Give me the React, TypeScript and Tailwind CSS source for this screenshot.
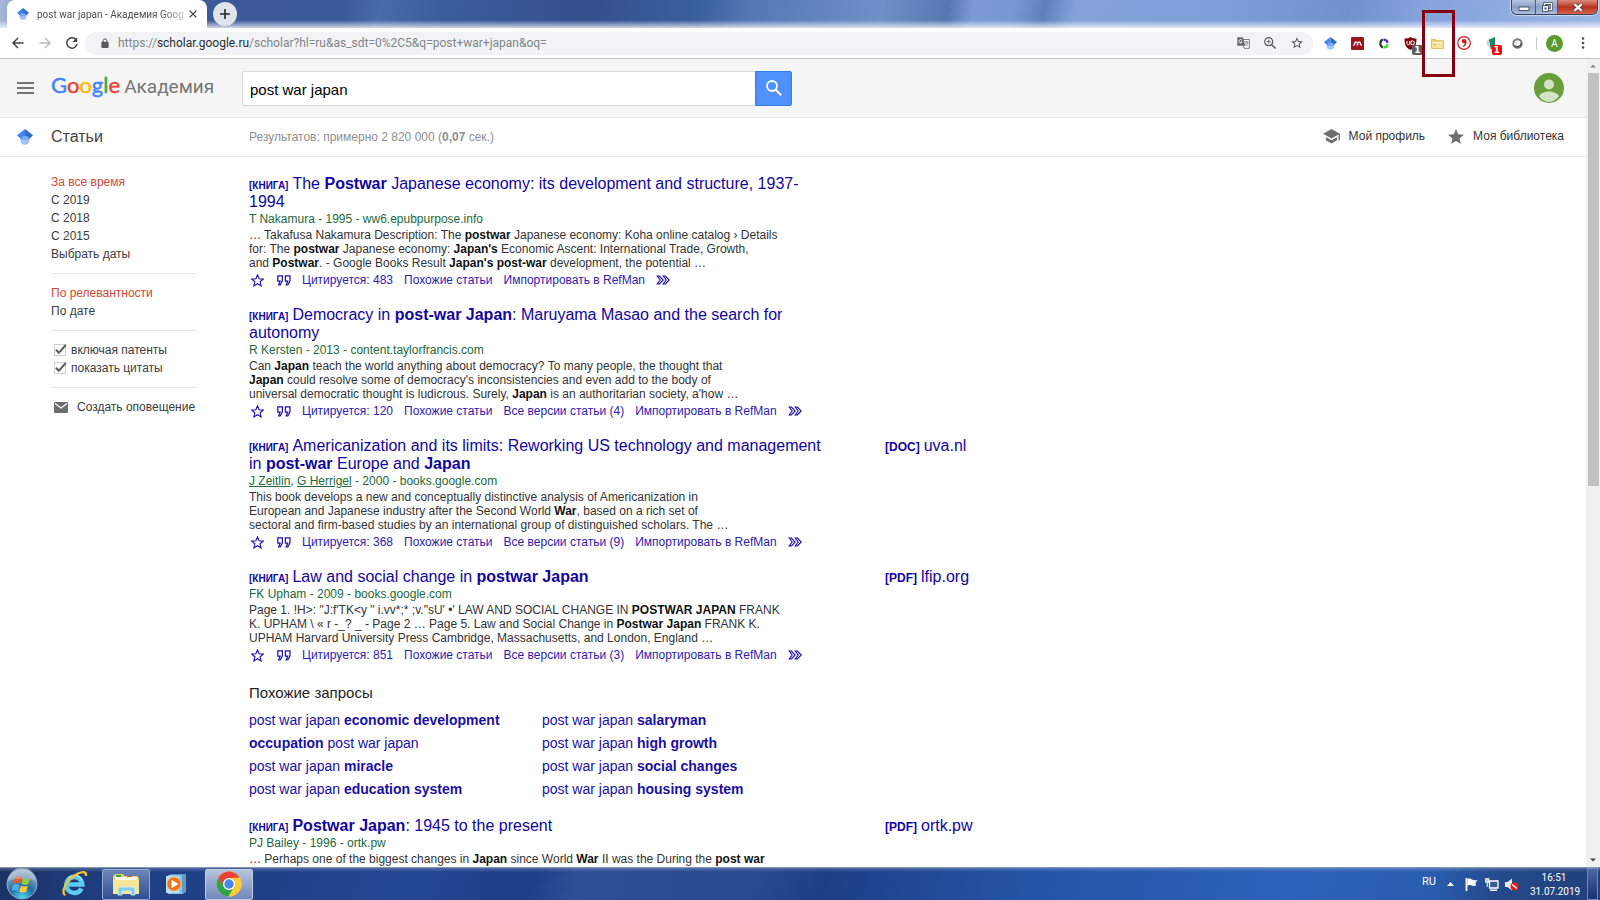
import type { ReactNode } from "react";

type Result = {
  title: string[];
  byline: ReactNode;
  snippet: string[];
  cited: number;
  versions?: number;
  file?: { kind: string; host: string };
};

const results: Result[] = [
  {
    title: ["The **Postwar** Japanese economy: its development and structure, 1937-", "1994"],
    byline: "T Nakamura - 1995 - ww6.epubpurpose.info",
    snippet: [
      "… Takafusa Nakamura Description: The **postwar** Japanese economy: Koha online catalog › Details",
      "for: The **postwar** Japanese economy: **Japan's** Economic Ascent: International Trade, Growth,",
      "and **Postwar**. - Google Books Result **Japan's post-war** development, the potential …",
    ],
    cited: 483,
  },
  {
    title: ["Democracy in **post-war Japan**: Maruyama Masao and the search for", "autonomy"],
    byline: "R Kersten - 2013 - content.taylorfrancis.com",
    snippet: [
      "Can **Japan** teach the world anything about democracy? To many people, the thought that",
      "**Japan** could resolve some of democracy's inconsistencies and even add to the body of",
      "universal democratic thought is ludicrous. Surely, **Japan** is an authoritarian society, a'how …",
    ],
    cited: 120,
    versions: 4,
  },
  {
    title: ["Americanization and its limits: Reworking US technology and management", "in **post-war** Europe and **Japan**"],
    byline: (
      <>
        <a href="#zeitlin" className="underline">J Zeitlin</a>, <a href="#herrigel" className="underline">G Herrigel</a> - 2000 - books.google.com
      </>
    ),
    snippet: [
      "This book develops a new and conceptually distinctive analysis of Americanization in",
      "European and Japanese industry after the Second World **War**, based on a rich set of",
      "sectoral and firm-based studies by an international group of distinguished scholars. The …",
    ],
    cited: 368,
    versions: 9,
    file: { kind: "[DOC]", host: "uva.nl" },
  },
  {
    title: ["Law and social change in **postwar Japan**"],
    byline: "FK Upham - 2009 - books.google.com",
    snippet: [
      "Page 1. !H>: \"J:f'TK<y \" i.vv*;* ;v.\"sU' •' LAW AND SOCIAL CHANGE IN **POSTWAR JAPAN** FRANK",
      "K. UPHAM \\ « r -_? _ - Page 2 … Page 5. Law and Social Change in **Postwar Japan** FRANK K.",
      "UPHAM Harvard University Press Cambridge, Massachusetts, and London, England …",
    ],
    cited: 851,
    versions: 3,
    file: { kind: "[PDF]", host: "lfip.org" },
  },
];

const lastResult: Result = {
  title: ["**Postwar Japan**: 1945 to the present"],
  byline: "PJ Bailey - 1996 - ortk.pw",
  snippet: ["… Perhaps one of the biggest changes in **Japan** since World **War** II was the During the **post war**"],
  cited: 0,
  file: { kind: "[PDF]", host: "ortk.pw" },
};

const related = [
  "post war japan **economic development**",
  "post war japan **salaryman**",
  "**occupation** post war japan",
  "post war japan **high growth**",
  "post war japan **miracle**",
  "post war japan **social changes**",
  "post war japan **education system**",
  "post war japan **housing system**",
];

function Rich({ text }: { text: string }) {
  return <>{text.split("**").map((part, i) => (i % 2 ? <b key={i}>{part}</b> : part))}</>;
}

function ScholarMark({ className }: { className: string }) {
  return (
    <svg viewBox="0 0 16 16" className={className} aria-hidden="true">
      <circle cx="8" cy="11.200" r="4.600" fill="#a0c3ff" />
      <path d="M8 0 0 6.200 3.800 10Q5.200 7.200 8 7.200z" fill="#4285f4" />
      <path d="M8 0l8 6.200L12.200 10Q10.800 7.200 8 7.200z" fill="#356ac3" />
      <path d="M3.600 9.600a4.900 4.900 0 0 1 8.800 0L11.500 11h-7z" fill="#76a7fa" />
    </svg>
  );
}

function TitleBar() {
  return (
    <div className="flex h-7 shrink-0 items-start bg-[linear-gradient(to_bottom,transparent_72%,rgba(255,255,255,0.75)),linear-gradient(100deg,#a9b8d8_0px,#8fa3cd_20px,#3d5897_180px,#3a5a9b_340px,#4a6ba9_375px,#3b5c9c_440px,#34508d_580px,#3a5f9e_690px,#5578b4_740px,#6f8fc7_870px,#5777b0_935px,#7b9ad4_960px,#7898d2_1000px,#5f80bb_1030px,#83a2da_1060px,#7f9fd8_1200px,#7191cd_1330px,#84a3dc_1400px,#9db7e4_1600px)] pl-[7px]">
      <div className="flex h-7 w-50 items-center rounded-t-lg bg-white pr-[6px] pl-[10px] font-['Roboto',sans-serif] text-[10px] text-[#4b4f54]">
        <ScholarMark className="mr-2 size-3 shrink-0" />
        <span className="min-w-0 flex-1 whitespace-nowrap [mask-image:linear-gradient(to_right,black_85%,rgba(0,0,0,0.25))]">post war japan - Академия Goog</span>
        <button aria-label="Закрыть вкладку" className="flex size-4 items-center justify-center">
          <svg viewBox="0 0 8 8" className="size-2"><path d="M.6.6l6.8 6.8M7.4.6.6 7.4" stroke="#3c4043" strokeWidth="1.3" /></svg>
        </button>
      </div>
      <button aria-label="Новая вкладка" className="mt-[2px] ml-[6px] flex size-6 items-center justify-center rounded-full bg-[#dfe3ea]">
        <svg viewBox="0 0 10 10" className="size-[10px]"><path d="M5 0v10M0 5h10" stroke="#24272b" strokeWidth="1.6" /></svg>
      </button>
      <div className="mr-[2px] ml-auto flex h-[15px] overflow-hidden rounded-b-md border border-t-0 border-[#39445e] shadow-[0_0_1px_1px_rgba(255,255,255,0.5)]">
        <button aria-label="Свернуть" className="flex w-6 items-center justify-center border-r border-[#4c5a78] bg-linear-to-b from-[#b7c7e2] via-[#8b9fc4] to-[#a9bcdc]">
          <svg viewBox="0 0 12 6" className="mt-1 h-[6px] w-3"><rect x="1" y="1" width="10" height="3.5" fill="#fff" stroke="#4a5368" /></svg>
        </button>
        <button aria-label="Свернуть в окно" className="flex w-[22px] items-center justify-center border-r border-[#4c5a78] bg-linear-to-b from-[#b7c7e2] via-[#8b9fc4] to-[#a9bcdc]">
          <svg viewBox="0 0 12 11" className="h-[11px] w-3"><path d="M3.5 1.5h7v6h-7z" fill="none" stroke="#4a5368" strokeWidth="2.6" /><path d="M3.5 1.5h7v6h-7z" fill="none" stroke="#fff" strokeWidth="1.2" /><path d="M1.5 3.5h6v6h-6z" fill="#fff" stroke="#4a5368" /><path d="M3.4 5.4h2.2v2H3.4z" fill="#4a5368" /></svg>
        </button>
        <button aria-label="Закрыть" className="flex w-[39px] items-center justify-center bg-linear-to-b from-[#d58a7c] via-[#b93320] to-[#d4624c]">
          <svg viewBox="0 0 12 9" className="h-[9px] w-3"><path d="M2 1l8 7M10 1 2 8" stroke="#5a2a28" strokeWidth="3.8" /><path d="M2.3 1.2l7.4 6.6M9.7 1.2 2.3 7.8" stroke="#fff" strokeWidth="2.3" /></svg>
        </button>
      </div>
    </div>
  );
}

function Ext({ label, children }: { label: string; children: ReactNode }) {
  return <button aria-label={label} className="relative flex h-6 flex-1 items-center justify-center">{children}</button>;
}

function Toolbar() {
  return (
    <div className="flex h-[31px] shrink-0 items-center border-b border-[#c4c5c6] bg-white pr-1 pl-[5px]">
      <button aria-label="Назад" className="flex w-[26px] justify-center">
        <svg viewBox="0 0 14 14" className="size-3" fill="none" stroke="#3f4347" strokeWidth="1.7"><path d="M13.5 7H1.5M7 1.2 1.2 7 7 12.8" /></svg>
      </button>
      <button aria-label="Вперёд" className="flex w-[27px] justify-center">
        <svg viewBox="0 0 14 14" className="size-3" fill="none" stroke="#b9bbbe" strokeWidth="1.7"><path d="M.5 7h12M7 1.2 12.8 7 7 12.8" /></svg>
      </button>
      <button aria-label="Обновить" className="flex w-[27px] justify-center">
        <svg viewBox="0 0 14 14" className="size-3"><path d="M11.8 3.4A6 6 0 1 0 12.9 8" fill="none" stroke="#3f4347" strokeWidth="1.7" /><path d="M13 .3v5.4H7.6z" fill="#3f4347" /></svg>
      </button>
      <div className="flex h-[23px] min-w-0 flex-1 items-center rounded-full bg-[#f1f3f4] pr-[3px] pl-4">
        <svg viewBox="0 0 8 11" className="mr-[9px] h-[10px] w-2 shrink-0"><rect y="4" width="8" height="7" rx="1" fill="#55595e" /><path d="M2 4.5V3a2 2 0 0 1 4 0v1.5" fill="none" stroke="#55595e" strokeWidth="1.1" /></svg>
        <span className="flex-1 whitespace-nowrap font-['Roboto',sans-serif] text-xs text-[#80868b]">
          https://<span className="text-[#2b2e32]">scholar.google.ru</span>/scholar?hl=ru&amp;as_sdt=0%2C5&amp;q=post+war+japan&amp;oq=
        </span>
        <button aria-label="Перевести" className="flex w-[27px] justify-center">
          <svg viewBox="0 0 13 12" className="h-3 w-[13px]"><path d="M5 2.5h7.3v8.8H7.2z" fill="#fff" stroke="#6a6e73" strokeWidth=".9" /><path d="M.3.3h5.5l2.4 8.5H.3z" fill="#62666b" /><path d="M5 3.2A1.7 1.7 0 1 0 5.2 5H3.6" fill="none" stroke="#fff" strokeWidth=".9" /><path d="M7.4 5h4M9.4 4v1M10.8 5c-.3 1.6-1.3 2.8-2.4 3.5M8.3 6.2c.5 1.1 1.3 2 2.5 2.6" fill="none" stroke="#6a6e73" strokeWidth=".8" /></svg>
        </button>
        <button aria-label="Масштаб" className="flex w-[26px] justify-center">
          <svg viewBox="0 0 12 12" className="size-3" fill="none" stroke="#55595e"><circle cx="4.7" cy="4.7" r="4" strokeWidth="1.2" /><path d="M7.7 7.7l3.8 3.8" strokeWidth="1.5" /><path d="M4.7 2.8v3.8M2.8 4.7h3.8" strokeWidth=".9" /></svg>
        </button>
        <button aria-label="Добавить в закладки" className="flex w-[27px] justify-center">
          <svg viewBox="0 0 24 24" className="size-[14px]"><path d="M22 9.24l-7.19-.62L12 2 9.190 8.63 2 9.240l5.46 4.730L5.820 21 12 17.270 18.180 21l-1.630-7.030zM12 15.400l-3.760 2.270 1-4.280-3.320-2.880 4.380-.380L12 6.100l1.710 4.040 4.380.380-3.320 2.880 1 4.280z" fill="#4f5358" /></svg>
        </button>
      </div>
      <div className="ml-1 flex w-[214px] items-center">
        <Ext label="Академия"><ScholarMark className="size-[13px]" /></Ext>
        <Ext label="Mendeley">
          <svg viewBox="0 0 13 13" className="size-[13px]"><rect width="13" height="13" rx="1" fill="#9d1620" /><path d="M2.200 8.300c1.100 0 1.200-.6 1.300-1.300.1-1.200.5-2 1.200-2s1.200.8 1.800.8 1.100-.8 1.800-.8 1.100.8 1.200 2c.1.700.200 1.300 1.300 1.300" fill="none" stroke="#fff" strokeWidth="1.300" /><circle cx="6.500" cy="7.600" r="1" fill="#fff" /></svg>
        </Ext>
        <Ext label="Clarivate">
          <svg viewBox="0 0 11 12" className="h-[11px] w-[10px]" fill="none" strokeWidth="2.300"><path d="M4.300 1.600C2 2.500 1.500 3.700 1.500 6s.5 3.500 2.800 4.400" stroke="#26322c" /><path d="M5 1.600c2.500.2 4.200 1.300 4.400 3.800" stroke="#5d16e8" /><path d="M5 10.400c2.500-.2 4.200-1.300 4.400-3.800" stroke="#2be010" /></svg>
        </Ext>
        <Ext label="uBlock">
          <svg viewBox="0 0 13 13" className="size-[13px]"><path d="M6.500 0C8.500 1.200 10.500 1.500 12.500 1.500c0 5.500-1 9-6 11.500-5-2.500-6-6-6-11.500 2 0 4-.3 6-1.500z" fill="#800610" /><path d="M3 4v2.500q0 1.200 1.400 1.200T5.800 6.500V4M7 4v3.700h1.600a1.800 1.800 0 0 0 0-3.700z" fill="none" stroke="#fff" strokeWidth="1" /></svg>
          <span className="absolute top-[14px] left-[15px] rounded-xs bg-[#5b5e60] px-[2px] font-['DejaVu_Sans',sans-serif] text-[9px] leading-[10px] font-bold text-white">1</span>
        </Ext>
        <Ext label="Папка">
          <svg viewBox="0 0 13 11" className="h-[11px] w-[13px]"><path d="M.5 1.500h4l1 1.200h7v7.800H.5z" fill="#f4cf62" stroke="#dcae45" strokeWidth=".8" /><path d="M1.500 3.800h10v1.500h-10z" fill="#fff8df" /><path d="M.8 5h11.400v5.200H.8z" fill="#fae391" /><path d="M2 6.500h3" stroke="#e2b64c" /></svg>
          <span className="pointer-events-none absolute top-[-21px] left-[-2px] z-10 h-[67px] w-[33px] border-3 border-[#86000f]" />
        </Ext>
        <Ext label="Цитирование">
          <svg viewBox="0 0 14 14" className="size-[14px]"><circle cx="7" cy="7" r="6.300" fill="#fff" stroke="#d01a22" strokeWidth="1.200" /><path d="M7 3a2.100 2.100 0 1 0 .8 4C7.700 8.400 7 9.300 5.500 10.200l.5.900C8.400 10 9.600 8.200 9.600 5.900 9.600 4.100 8.500 3 7 3z" fill="#d01a22" /></svg>
        </Ext>
        <Ext label="Kaspersky">
          <svg viewBox="0 0 12 13" className="h-[13px] w-3"><path d="M3.500 2.800 10 0v8.500L6 13z" fill="#1d8a63" /><path d="M1.500 3l3.500 2.500v5.500L2 8z" fill="#c5d3cf" /></svg>
          <span className="absolute top-[14px] left-[14px] rounded-xs bg-[#fb0009] px-[2px] font-['DejaVu_Sans',sans-serif] text-[9px] leading-[10px] font-bold text-white">1</span>
        </Ext>
        <Ext label="Расширение">
          <svg viewBox="0 0 12 12" className="size-[11px]"><circle cx="6" cy="6" r="4.600" fill="#fff" stroke="#77797c" strokeWidth="2.200" /><path d="M3 8.500a4.400 4.400 0 0 0 7.200-2.900" fill="none" stroke="#4c4f52" strokeWidth="1.500" /></svg>
        </Ext>
      </div>
      <span className="mx-[5px] h-[13px] w-px bg-[#c9cbce]" />
      <button aria-label="Профиль" className="ml-1 flex size-[17px] items-center justify-center rounded-full bg-[#5a9a2e] font-['Open_Sans',sans-serif] text-[10px] text-white">A</button>
      <button aria-label="Меню" className="ml-[6px] flex w-[27px] justify-center">
        <svg viewBox="0 0 4 12" className="h-3 w-1" fill="#4a4d51"><circle cx="2" cy="1.500" r="1.300" /><circle cx="2" cy="6" r="1.300" /><circle cx="2" cy="10.500" r="1.300" /></svg>
      </button>
    </div>
  );
}

function Header() {
  return (
    <header className="flex h-[59px] shrink-0 items-center border-b border-[#e8e8e8] bg-[#f5f5f5] pr-[22px] pl-[17px]">
      <button aria-label="Меню Академии" className="w-[34px]">
        <svg viewBox="0 0 17 12" className="h-3 w-[17px]" stroke="#757575" strokeWidth="2"><path d="M0 1h17M0 6h17M0 11h17" /></svg>
      </button>
      <a href="#home" className="flex w-[191px] items-baseline gap-1 pb-1 whitespace-nowrap">
        <span className="text-[22px] leading-6 font-['Lato',sans-serif] [-webkit-text-stroke:0.5px_currentColor]">
          <span className="text-[#4285f4]">G</span><span className="text-[#ea4335]">o</span><span className="text-[#fbbc05]">o</span><span className="text-[#4285f4]">g</span><span className="text-[#34a853]">l</span><span className="text-[#ea4335]">e</span>
        </span>
        <span className="font-['Roboto',sans-serif] text-[19px] leading-6 text-[#757575]">Академия</span>
      </a>
      <form className="flex h-[35px] w-[550px]" onSubmit={(e) => e.preventDefault()}>
        <input aria-label="Поиск" defaultValue="post war japan" className="min-w-0 flex-1 rounded-l-xs border border-r-0 border-[#d9d9d9] bg-white px-[7px] pt-1 text-[15px] text-black outline-none" />
        <button aria-label="Найти" className="flex w-[37px] items-center justify-center rounded-r-xs border border-[#2f7ef0] bg-[#4d90fe]">
          <svg viewBox="0 0 16 16" className="size-4" fill="none" stroke="#fff"><circle cx="6" cy="6" r="5" strokeWidth="1.800" /><path d="M9.700 9.700l5.500 5.500" strokeWidth="2.200" /></svg>
        </button>
      </form>
      <button aria-label="Аккаунт" className="ml-auto">
        <svg viewBox="0 0 30 30" className="size-[30px]"><circle cx="15" cy="15" r="15" fill="#689f38" /><circle cx="15" cy="11.500" r="5" fill="#d3e3c6" /><path d="M5 23.200c1.500-3.200 6-4.700 10-4.700s8.500 1.500 10 4.700A14 14 0 0 1 15 29 14 14 0 0 1 5 23.200z" fill="#d3e3c6" /></svg>
      </button>
    </header>
  );
}

function SubHeader() {
  return (
    <div className="flex h-[39px] shrink-0 items-center border-b border-[#e8e8e8] bg-white pr-[22px] pl-[17px]">
      <ScholarMark className="size-4" />
      <h1 className="ml-[18px] w-[198px] text-base text-[#444]">Статьи</h1>
      <p className="text-xs text-[#8f8f8f]">Результатов: примерно 2 820 000 (<b>0,07</b> сек.)</p>
      <nav className="ml-auto flex items-center gap-[23px] pb-[2px] text-xs text-[#333]">
        <a href="#profile" className="flex items-center gap-[9px]">
          <svg viewBox="0 0 18 16" className="h-[15px] w-[17px]" fill="#6e6e6e"><path d="M9 0 0 5l9 5 7.500-4.200V12H18V5z" /><path d="M3 8.500v3.500l6 3.500 6-3.500V8.500L9 12z" /></svg>
          Мой профиль
        </a>
        <a href="#library" className="flex items-center gap-[9px]">
          <svg viewBox="2 2 20 19" className="h-[15px] w-4" fill="#6e6e6e"><path d="M12 17.270 18.180 21l-1.640-7.030L22 9.240l-7.190-.61L12 2 9.190 8.630 2 9.240l5.460 4.730L5.820 21z" /></svg>
          Моя библиотека
        </a>
      </nav>
    </div>
  );
}

function Check({ id, label }: { id: string; label: string }) {
  return (
    <div className="flex h-[18px] items-center pl-[2px]">
      <span className="mr-1 grid size-[14px] place-items-center *:col-start-1 *:row-start-1">
        <input id={id} type="checkbox" defaultChecked className="size-3 appearance-none border border-[#cfcfcf] bg-white" />
        <svg viewBox="0 0 14 14" className="pointer-events-none size-[14px]"><path d="M3 6.800l2.800 3L12.800 2" fill="none" stroke="#5c5c5c" strokeWidth="2" /></svg>
      </span>
      <label htmlFor={id}>{label}</label>
    </div>
  );
}

function Sidebar() {
  return (
    <aside className="w-[146px] shrink-0 text-xs leading-[18px] text-[#3c3c3c] [&_a]:block">
      <nav className="border-b border-[#e8e8e8] pb-[10px]">
        <a href="#all" className="text-[#d14836]">За все время</a>
        <a href="#2019">С 2019</a>
        <a href="#2018">С 2018</a>
        <a href="#2015">С 2015</a>
        <a href="#range">Выбрать даты</a>
      </nav>
      <nav className="border-b border-[#e8e8e8] py-[10px]">
        <a href="#relevance" className="text-[#d14836]">По релевантности</a>
        <a href="#date">По дате</a>
      </nav>
      <div className="border-b border-[#e8e8e8] py-[10px]">
        <Check id="patents" label="включая патенты" />
        <Check id="citations" label="показать цитаты" />
      </div>
      <div className="flex items-center gap-[9px] pt-[10px] pl-[3px]">
        <svg viewBox="0 0 14 11" className="h-[11px] w-[14px]"><rect width="14" height="11" rx="1" fill="#6e6e6e" /><path d="M1 1.500l6 4.500 6-4.500" fill="none" stroke="#fff" strokeWidth="1.300" /></svg>
        <button className="whitespace-nowrap">Создать оповещение</button>
      </div>
    </aside>
  );
}

function ResultItem({ item }: { item: Result }) {
  return (
    <article className="mb-[17px] flex whitespace-nowrap">
      <div className="w-[636px] shrink-0">
        <h3 className="text-base leading-[18px] text-[#1206a0]">
          {item.title.map((line, i) => (
            <span key={i} className="block">
              {i === 0 && <span className="mr-1 text-[10px] leading-none font-bold">[КНИГА]</span>}
              <a href="#result"><Rich text={line} /></a>
            </span>
          ))}
        </h3>
        <div className="text-xs leading-[17px] text-[#22683a]">{item.byline}</div>
        <div className="text-xs leading-[14px] text-[#333] [&_b]:text-[#111]">
          {item.snippet.map((line, i) => <div key={i}><Rich text={line} /></div>)}
        </div>
        {item.cited > 0 && (
          <div className="mt-px flex h-[18px] items-center gap-[11px] pl-[2px] text-xs text-[#2d22ae]">
            <button aria-label="Сохранить">
              <svg viewBox="0 0 13 13" className="size-[13px]"><path d="M6.500.9l1.600 3.900 4.200.3-3.200 2.700 1 4.100-3.600-2.200-3.600 2.200 1-4.100L.7 5.100l4.200-.3z" fill="none" stroke="#1a0dab" strokeWidth="1.100" /></svg>
            </button>
            <button aria-label="Цитировать" className="ml-[2px]">
              <svg viewBox="0 0 14 11" className="h-[11px] w-[14px]" fill="none" stroke="#1a0dab" strokeWidth="1.200"><path d="M.8.8h4.600v5L3.200 10H1.600l1.500-3.800H.8zM8.400.8H13v5L10.800 10H9.200l1.500-3.800H8.400z" /></svg>
            </button>
            <a href="#cited">Цитируется: {item.cited}</a>
            <a href="#similar">Похожие статьи</a>
            {item.versions && <a href="#versions">Все версии статьи ({item.versions})</a>}
            <a href="#refman">Импортировать в RefMan</a>
            <button aria-label="Ещё">
              <svg viewBox="0 0 14 10" className="h-[10px] w-[14px]" fill="none" stroke="#1a0dab" strokeWidth="1.100"><path d="M1.200 1h2.200L7.200 5 3.400 9H1.200L4.200 5zM7.200 1h2.200L13.200 5 9.400 9H7.200L10.200 5z" /></svg>
            </button>
          </div>
        )}
      </div>
      {item.file && (
        <a href="#file" className="text-base leading-[18px] text-[#1206a0]"><span className="mr-1 text-xs leading-none font-bold">{item.file.kind}</span>{item.file.host}</a>
      )}
    </article>
  );
}

function Scrollbar() {
  return (
    <div className="flex w-[14px] shrink-0 flex-col items-center bg-[#f1f1f1]" aria-hidden="true">
      <svg viewBox="0 0 14 14" className="size-[14px]"><path d="M4 8.500 7 5.500l3 3z" fill="#8a8a8a" /></svg>
      <div className="flex w-full flex-1 justify-center"><div className="h-[53%] w-[11px] bg-[#c1c1c1]" /></div>
      <svg viewBox="0 0 14 14" className="size-[14px]"><path d="M4 5.500l3 3 3-3z" fill="#404040" /></svg>
    </div>
  );
}

function Taskbar() {
  return (
    <footer className="flex h-[33px] shrink-0 items-center border-t border-[#8495ae] bg-[linear-gradient(to_bottom,rgba(255,255,255,0.22),transparent_12%),linear-gradient(105deg,#1b3263_0px,#1f3f82_110px,#21438b_300px,#234690_400px,#1f4088_520px,#2d4f96_560px,#27488f_740px,#1e3f85_800px,#2454a6_1000px,#2c62b8_1250px,#2a5cae_1390px,#244a8b_1450px,#1e3c74_1600px)] font-['Roboto',sans-serif] text-white">
      <button aria-label="Пуск" className="ml-[6px] w-[34px]">
        <svg viewBox="0 0 32 32" className="size-8">
          <defs>
            <radialGradient id="orb" cx=".5" cy=".95" r=".9"><stop offset="0" stopColor="#49d8f5" /><stop offset=".45" stopColor="#246a9e" /><stop offset="1" stopColor="#9ab3c8" /></radialGradient>
          </defs>
          <circle cx="16" cy="16" r="15" fill="url(#orb)" stroke="#8fb0cf" />
          <path d="M9 9.500c2.500-1.500 4.500-1.300 6.500 0L14 15.500c-2-1.200-4-1.300-6.500-.2z" fill="#ee5a24" />
          <path d="M16.800 10c2.200 1.300 4.500 1.300 7 .2l-1.600 6c-2.300 1-4.600.9-6.900-.3z" fill="#94c93d" />
          <path d="M7.100 16.800c2.500-1.100 4.400-1 6.500.2L12 23c-2-1.300-4-1.300-6.500-.2z" fill="#4aaee8" />
          <path d="M14.900 17.500c2.200 1.200 4.500 1.200 6.900.2l-1.600 6c-2.300 1-4.600.9-6.900-.3z" fill="#fdc82f" />
          <path d="M2 13a14 14 0 0 1 28 0c-8-3-20-3-28 0z" fill="#fff" opacity=".28" />
        </svg>
      </button>
      <button aria-label="Internet Explorer" className="ml-5 w-[30px]">
        <svg viewBox="0 0 28 28" className="size-7">
          <path d="M21.500 18.500A8 8 0 1 1 22.300 14.500H8" fill="none" stroke="#5ccbf3" strokeWidth="4.600" />
          <path d="M22 10c-1-2.500-3.500-4.500-7-4.500-3 0-5 1.200-6.500 3" fill="none" stroke="#b7ecff" strokeWidth="1.300" />
          <path d="M5.500 25C0 23.500 6 9 18 3.500c4.500-2 8.500-2.500 8 2.500" fill="none" stroke="#f5c22c" strokeWidth="2.300" />
        </svg>
      </button>
      <button aria-label="Проводник" className="ml-3 flex h-[31px] w-12 items-center justify-center rounded-xs border border-[#93a8d2] bg-linear-to-b from-[#6e86b8] to-[#2f4f91]">
        <svg viewBox="0 0 28 24" className="h-6 w-7">
          <path d="M1 22V4l2-2h8l1 2h13l2 2v16z" fill="#e9cf74" />
          <path d="M4 3h5v2H4z" fill="#3f9f4f" /><path d="M15 4h5v2h-5z" fill="#d24a35" />
          <path d="M3 5h22v4H3z" fill="#fffbe6" />
          <path d="M1 8h26v14H1z" fill="#f8e596" />
          <path d="M6 23v-6q0-2 2-2h13q2 0 2 2v6h-4v-4h-9v4z" fill="#86cdea" stroke="#d5f1fb" strokeWidth=".8" />
        </svg>
      </button>
      <button aria-label="Медиаплеер" className="ml-[14px] flex w-6 justify-center">
        <svg viewBox="0 0 22 22" className="size-[22px]">
          <path d="M5 1h16v18l-3 2H5z" fill="#5d9cc6" /><path d="M3 2h14v19H3z" fill="#8cc5e3" /><path d="M1 3h13v17H1z" fill="#b6dff1" />
          <circle cx="9" cy="11" r="7" fill="#f0741a" stroke="#fbc28e" strokeWidth=".8" /><path d="M6.500 6.800v8.400L13.500 11z" fill="#fff" />
        </svg>
      </button>
      <button aria-label="Chrome" className="ml-[17px] flex h-[31px] w-12 items-center justify-center rounded-xs border border-[#c2cde4] bg-linear-to-b from-[#b7c3dd] to-[#7288bb]">
        <svg viewBox="0 0 26 26" className="size-[26px]">
          <circle cx="13" cy="13" r="12.500" fill="#fbcc34" />
          <path d="M2.200 6.750A12.500 12.500 0 0 1 23.800 6.750L13 7 7.500 16z" fill="#ea4335" />
          <path d="M2.200 6.750A12.500 12.500 0 0 0 12.500 25.500L18.500 16 8 16z" fill="#2fa350" />
          <path d="M23.800 6.750A12.500 12.500 0 0 1 12.500 25.500L18.500 15 17 6.900z" fill="#fbcc34" />
          <circle cx="13" cy="13" r="6" fill="#fff" /><circle cx="13" cy="13" r="4.700" fill="#4688f1" />
        </svg>
      </button>
      <div className="ml-auto flex h-full items-center">
        <span className="mb-1 text-[11px]">RU</span>
        <button aria-label="Скрытые значки" className="ml-[11px]"><svg viewBox="0 0 7 4" className="h-1 w-[7px]"><path d="M0 4 3.500 0 7 4z" fill="#fff" /></svg></button>
        <svg viewBox="0 0 13 13" className="ml-[11px] size-[13px]"><path d="M1.500 0v13" stroke="#fff" strokeWidth="1.800" /><path d="M2.500 1c2-1 3.500 0 5 .8 1.500.8 3 .5 5 .2l-2 2.700L11 7.500c-2 .8-3.500.3-4.800-.3S3.700 7 2.500 7.500z" fill="#fff" /></svg>
        <svg viewBox="0 0 14 13" className="ml-[7px] h-[13px] w-[14px]"><path d="M4.500 3h8.500v7H4.500z" fill="#3b5b92" stroke="#fff" strokeWidth="1.300" /><path d="M5 12.200h7" stroke="#fff" strokeWidth="1.500" /><path d="M.5.500h3.500v4H.500z" fill="#c7d0df" stroke="#fff" strokeWidth=".7" /><path d="M2.200 4.500V9" stroke="#fff" /></svg>
        <svg viewBox="0 0 14 13" className="ml-[6px] h-[13px] w-[14px]"><path d="M0 4h2.500L7 .5v12L2.500 9H0z" fill="#e9edf5" /><circle cx="9.500" cy="8.500" r="4" fill="#e02020" /><path d="M7.200 6.600l4.600 3.800" stroke="#fff" strokeWidth="1.300" /></svg>
        <time className="ml-[11px] w-12 pt-[2px] text-center text-[10px] leading-[14px]">16:51<br />31.07.2019</time>
        <button aria-label="Показать рабочий стол" className="mr-[2px] ml-[9px] h-full w-[11px] border border-[#6f8ab8] bg-linear-to-b from-[#4a69a5] to-[#1a3570]" />
      </div>
    </footer>
  );
}

export default function App() {
  return (
    <div className="flex h-screen flex-col overflow-hidden bg-white font-['Liberation_Sans',Arial,sans-serif]">
      <TitleBar />
      <Toolbar />
      <div className="flex min-h-0 flex-1">
        <div className="flex min-w-0 flex-1 flex-col overflow-hidden">
          <Header />
          <SubHeader />
          <div className="flex min-h-0 flex-1 gap-[52px] overflow-hidden pt-4 pl-[51px]">
            <Sidebar />
            <main className="min-w-0 flex-1 pt-[2px]">
              {results.map((item, i) => <ResultItem key={i} item={item} />)}
              <section className="mb-4 pt-[3px]">
                <h2 className="mb-[7px] text-[15px] leading-[18px] text-[#222]">Похожие запросы</h2>
                <ul className="grid w-[586px] grid-cols-2 text-sm leading-[23px] text-[#1a0fa5]">
                  {related.map((q) => <li key={q}><a href="#related"><Rich text={q} /></a></li>)}
                </ul>
              </section>
              <ResultItem item={lastResult} />
            </main>
          </div>
        </div>
        <Scrollbar />
      </div>
      <Taskbar />
    </div>
  );
}
